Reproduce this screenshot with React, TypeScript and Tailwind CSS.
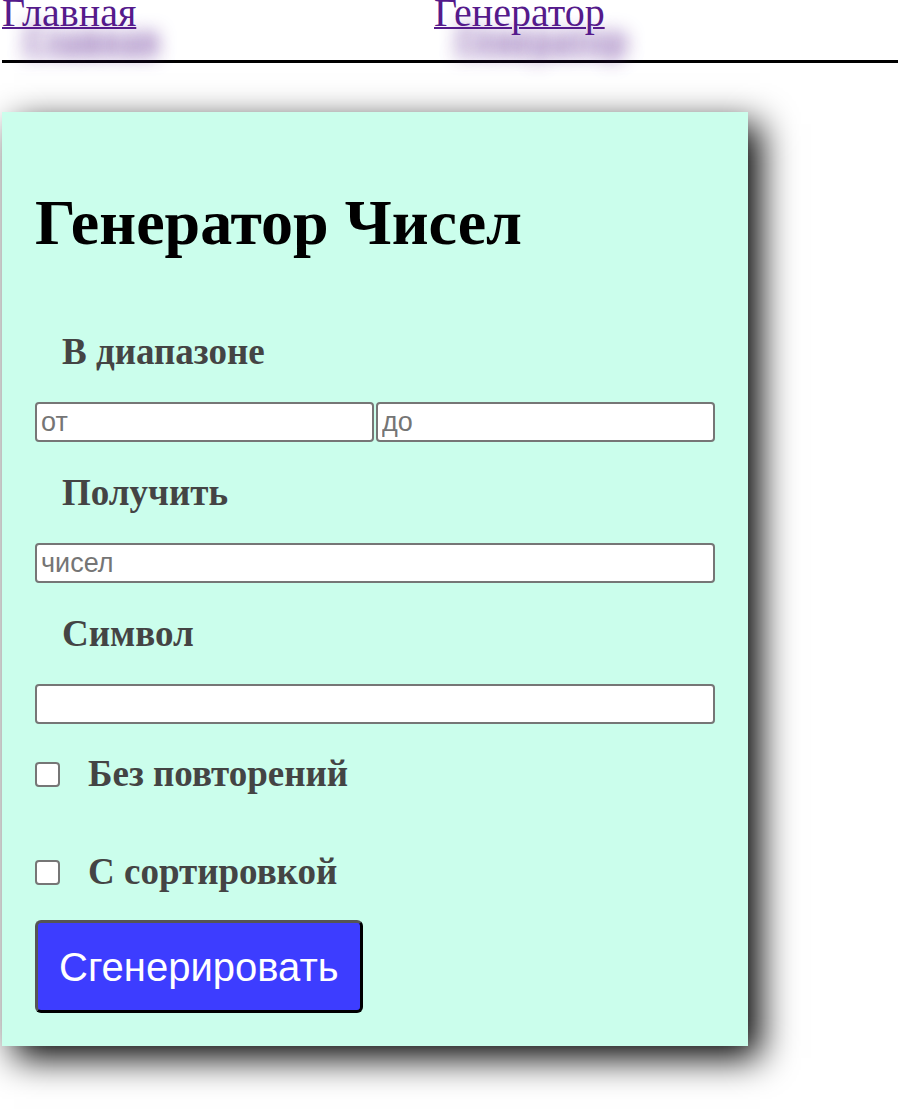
import React, { useState } from "react";

const serif = "font-['Liberation_Serif','Times_New_Roman',serif]";
const sans = "font-['Liberation_Sans',Arial,sans-serif]";

const labelCls = `${serif} text-[37px] leading-[36px] font-bold text-[#444444]`;
const inputCls = `${sans} h-[40px] border-2 border-[#767676] rounded-[4px] bg-white px-[4px] text-[27px] text-black placeholder:text-[#757575] outline-none`;
const checkCls =
  "appearance-none w-[25px] h-[25px] border-2 border-[#767676] rounded-[4px] bg-white checked:bg-[#0075ff]";

const NavLink: React.FC<{ label: string }> = ({ label }) => (
  <div className="w-[432px]">
    <a
      href="#"
      className={`${serif} text-[40px] leading-[40px] text-[#551a8b] underline decoration-2 [text-shadow:22px_26px_18px_#551a8b]`}
    >
      {label}
    </a>
  </div>
);

export default function App() {
  const [from, setFrom] = useState("");
  const [to, setTo] = useState("");
  const [count, setCount] = useState("");
  const [symbol, setSymbol] = useState("");
  const [unique, setUnique] = useState(false);
  const [sorted, setSorted] = useState(false);

  return (
    <div className="min-h-screen bg-white pl-[2px] overflow-hidden">
      {/* Nav */}
      <nav className="flow-root h-[63px] border-b-[3px] border-black">
        <div className="flex -mt-[7px]">
          <NavLink label="Главная" />
          <NavLink label="Генератор" />
        </div>
      </nav>

      {/* Card */}
      <div className="mt-[49px] w-[746px] bg-[#cbfeec] px-[33px] pt-[79px] pb-[33px] shadow-[12px_12px_34px_#000]">
        <h1 className={`${serif} text-[64px] leading-[64px] font-bold text-black`}>
          Генератор Чисел
        </h1>

        <div className={`${labelCls} mt-[79px] pl-[27px]`}>В диапазоне</div>
        <div className="mt-[32px] flex gap-[2px]">
          <input
            className={`${inputCls} w-[339px]`}
            placeholder="от"
            value={from}
            onChange={(e) => setFrom(e.target.value)}
          />
          <input
            className={`${inputCls} w-[339px]`}
            placeholder="до"
            value={to}
            onChange={(e) => setTo(e.target.value)}
          />
        </div>

        <div className={`${labelCls} mt-[33px] pl-[27px]`}>Получить</div>
        <input
          className={`${inputCls} mt-[32px] block w-[680px]`}
          placeholder="чисел"
          value={count}
          onChange={(e) => setCount(e.target.value)}
        />

        <div className={`${labelCls} mt-[33px] pl-[27px]`}>Символ</div>
        <input
          className={`${inputCls} mt-[32px] block w-[680px]`}
          value={symbol}
          onChange={(e) => setSymbol(e.target.value)}
        />

        <label className="mt-[32px] flex items-center gap-[28px]">
          <input
            type="checkbox"
            checked={unique}
            onChange={(e) => setUnique(e.target.checked)}
            className={checkCls}
          />
          <span className={labelCls}>Без повторений</span>
        </label>

        <label className="mt-[62px] flex items-center gap-[28px]">
          <input
            type="checkbox"
            checked={sorted}
            onChange={(e) => setSorted(e.target.checked)}
            className={checkCls}
          />
          <span className={labelCls}>С сортировкой</span>
        </label>

        <button
          type="button"
          className={`${sans} mt-[30px] block h-[93px] px-[21px] rounded-[6px] border-[3px] border-t-[#555555] border-l-[#555555] border-b-black border-r-black bg-[#3d3dff] text-[40px] text-white`}
        >
          Сгенерировать
        </button>
      </div>
    </div>
  );
}
